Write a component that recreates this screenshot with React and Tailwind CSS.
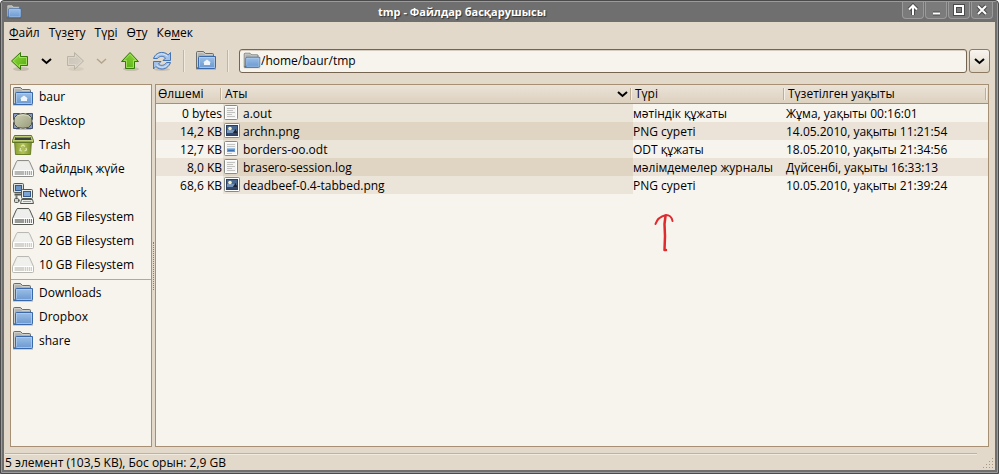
import React from "react";

function FolderIcon({ home = false, size = 22 }) {
  const id = home ? "home" : "plain";
  return (
    <svg width={size} height={size} viewBox="0 0 22 22" className="shrink-0" aria-hidden="true">
      <defs>
        <linearGradient id={`front-${id}`} x1="0" y1="0" x2="0" y2="1">
          <stop offset="0" stopColor="#9dbfe6" />
          <stop offset="1" stopColor="#6a98d0" />
        </linearGradient>
        <linearGradient id={`back-${id}`} x1="0" y1="0" x2="0" y2="1">
          <stop offset="0" stopColor="#bcbcb8" />
          <stop offset="1" stopColor="#858582" />
        </linearGradient>
      </defs>
      <rect x="1" y="18" width="20" height="2" fill="#000" opacity=".15" />
      <path d="M1.500 18.500V2.500Q1.500 1.500 2.500 1.500H8.500L10.500 3.500H17.500Q18.500 3.500 18.500 4.500V18.500Z" fill={`url(#back-${id})`} stroke="#6b6d69" />
      <path d="M2.500 17V2.500H8L10 4.500H17.500" fill="none" stroke="#d6d6d2" opacity=".8" />
      <path d="M4.500 6.500H20.500V17.500Q20.500 18.500 19.500 18.500H2.500Q3.500 18 3.500 16.500V7.500Q3.500 6.500 4.500 6.500Z" fill={`url(#front-${id})`} stroke="#3a69ab" />
      <path d="M4.500 16.500V7.500H19.500V17.500H4.500" fill="none" stroke="#b9d2ee" opacity=".7" />
      {home && <path d="M12 9.500L16 12.500H15V15H9V12.500H8Z" fill="#eef5fd" />}
    </svg>
  );
}

function DesktopIcon() {
  return (
    <svg width="22" height="22" viewBox="0 0 22 22" className="shrink-0" aria-hidden="true">
      <defs>
        <linearGradient id="desk" x1="0" y1="0" x2="1" y2="1">
          <stop offset="0" stopColor="#d0d2b6" />
          <stop offset="1" stopColor="#989a7b" />
        </linearGradient>
      </defs>
      <path d="M4 19.500H19" stroke="#000" opacity=".2" />
      <path d="M1.500 3.500H7.500L1.500 9.500ZM20.500 3.500H14.500L20.500 9.500ZM1.500 18.500H7.500L1.500 12.500ZM20.500 18.500H14.500L20.500 12.500Z" fill="#8798b8" stroke="#44516d" />
      <path d="M5.500 4.500Q11 2.500 16.500 4.500L19.500 7.500Q20.500 11 19.500 14.500L16.500 17.500Q11 19 5.500 17.500L2.500 14.500Q1.500 11 2.500 7.500Z" fill="url(#desk)" stroke="#4d5144" />
      <path d="M6 5.500Q11 4 16 5.500L18.500 8" fill="none" stroke="#e2e3cd" opacity=".8" />
    </svg>
  );
}

function TrashIcon() {
  return (
    <svg width="22" height="22" viewBox="0 0 22 22" className="shrink-0" aria-hidden="true">
      <defs>
        <linearGradient id="bin" x1="0" y1="0" x2="1" y2="0">
          <stop offset="0" stopColor="#8a9e32" />
          <stop offset=".5" stopColor="#b2c258" />
          <stop offset="1" stopColor="#7d912b" />
        </linearGradient>
      </defs>
      <path d="M2.500 6H19.500L18.500 20.500H3.500Z" fill="url(#bin)" stroke="#6a7f28" />
      <path d="M2.500 1.500H19.500L21.500 6.500V8.500H.5V6.500Z" fill="#c3d17c" stroke="#5f7525" />
      <path d="M3.500 3H18.500L19.500 6H2.500Z" fill="#39413c" />
      <path d="M4 3.500H18" stroke="#7c867d" />
      <path d="M1.500 7.500H20.500" stroke="#9aad48" />
      <path d="M9 12.500L11 11L13 12.500M14 14L14.500 16L12.500 17M10 17L8 16.500L8.500 14" fill="none" stroke="#dce8b0" strokeWidth="1.200" />
    </svg>
  );
}

function DriveIcon({ tone = "normal" }) {
  const outline = tone === "dark" ? "#555753" : tone === "normal" ? "#8e8e8b" : "#b9b8b3";
  const face = tone === "faded" ? "#eeede8" : "#e6e6e4";
  const slots = tone === "faded" ? "#cfcec9" : tone === "dark" ? "#7f817d" : "#a9aaa7";
  return (
    <svg width="24" height="22" viewBox="0 0 24 22" className="shrink-0" aria-hidden="true">
      <path d="M5.500 3.500Q5.800 2.500 7 2.500H17Q18.200 2.500 18.500 3.500L22.500 12.500V17.500Q22.500 18.500 21.500 18.500H2.500Q1.500 18.500 1.500 17.500V12.500Z" fill={face} stroke={outline} />
      <path d="M6.500 4H17.500L21 12H3Z" fill="#f0f0ee" opacity=".8" />
      <path d="M2.500 12.500H21.500V17.500H2.500Z" fill={face} stroke="#fff" />
      <path d="M4 15H13" stroke={slots} strokeWidth="4" opacity=".75" />
      <path d="M14.500 13V17M16.500 13V17M18.500 13V17M20.500 13V17" stroke={slots} />
    </svg>
  );
}

function NetworkIcon() {
  return (
    <svg width="24" height="22" viewBox="0 0 24 22" className="shrink-0" aria-hidden="true">
      <rect x="2.500" y="1.500" width="10" height="9" rx="1" fill="#dcdedb" stroke="#555753" />
      <rect x="4.500" y="3.500" width="6" height="5" fill="#6d95c6" stroke="#33598d" />
      <path d="M3.500 12.500H11" stroke="#555753" strokeWidth="2" />
      <rect x="10.500" y="7.500" width="11" height="9" rx="1" fill="#eceeeb" stroke="#555753" />
      <rect x="12.500" y="9.500" width="7" height="5" fill="#7ba3d3" stroke="#33598d" />
      <path d="M10.500 17.500H21.500L22.500 21.500H9.500Z" fill="#eceeeb" stroke="#555753" />
      <path d="M12 19.500H20" stroke="#a1a39f" />
      <path d="M5.500 13V18.500H9" fill="none" stroke="#7a7c78" strokeWidth="2" />
      <rect x="3.500" y="16.500" width="4" height="4" rx="1" fill="#d0d2ce" stroke="#555753" />
    </svg>
  );
}

function FileIcon({ kind }) {
  if (kind === "image") {
    return (
      <svg width="16" height="16" viewBox="0 0 16 16" className="shrink-0" aria-hidden="true">
        <rect x=".5" y=".5" width="15" height="14" rx="1" fill="#fff" stroke="#888a85" />
        <rect x="2" y="2" width="12" height="11" fill="#2a3d63" />
        <path d="M3 3H13V7H3Z" fill="#4a678f" />
        <path d="M3 7H13V10H3Z" fill="#7695bb" />
        <circle cx="6" cy="5.500" r="1.800" fill="#f5f3c7" />
        <path d="M8.500 10.500L11.500 6L13 8.500V10.500Z" fill="#1d2431" />
        <path d="M3 10H13V12H3Z" fill="#35486b" />
      </svg>
    );
  }
  return (
    <svg width="16" height="16" viewBox="0 0 16 16" className="shrink-0" aria-hidden="true">
      <rect x=".5" y=".5" width="13" height="14" rx="1" fill="#f4f4f3" stroke="#888a85" />
      <rect x="1.500" y="1.500" width="11" height="12" fill="none" stroke="#fff" />
      {kind === "office" ? (
        <>
          <path d="M3 3.500H11M3 5.500H11M3 12.500H8" stroke="#c4c5c2" />
          <rect x="3" y="7" width="8" height="4" fill="#6a9bd1" />
          <path d="M3 7.500H11" stroke="#9dc0e5" />
          <path d="M4 9.500H10" stroke="#3e73b3" />
        </>
      ) : (
        <path d="M3 3.500H11M3 5.500H9M3 7.500H11M3 9.500H8M3 11.500H11" stroke="#c1c2bf" />
      )}
    </svg>
  );
}

function ArrowIcon({ direction, muted = false }) {
  const turn = direction === "left" ? "rotate(0)" : direction === "right" ? "rotate(180 11 11)" : "rotate(90 11 11)";
  const id = `arrow-${direction}`;
  return (
    <svg width="22" height="22" viewBox="0 0 22 22" aria-hidden="true">
      <defs>
        <linearGradient id={id} x1="0" y1="0" x2="1" y2="1">
          <stop offset="0" stopColor={muted ? "#d6d1c4" : "#95dd40"} />
          <stop offset="1" stopColor={muted ? "#c9c4b7" : "#4ea80c"} />
        </linearGradient>
      </defs>
      <ellipse cx="12" cy="19" rx="8" ry="2" fill="#000" opacity={muted ? ".05" : ".13"} />
      <g transform={turn}>
        <path d="M2.500 11L11.500 2.500V6.500H18.500V15.500H11.500V19.500Z" fill={`url(#${id})`} stroke={muted ? "#b9b4a6" : "#357a09"} strokeLinejoin="round" />
        <path d="M4.200 11L10.500 5V7.500H17.500V14.500H10.500V17Z" fill="none" stroke={muted ? "#e0dbcf" : "#b4ea73"} opacity=".75" />
      </g>
    </svg>
  );
}

function RefreshIcon() {
  return (
    <svg width="22" height="22" viewBox="0 0 22 22" aria-hidden="true">
      <ellipse cx="11" cy="19.500" rx="8" ry="1.500" fill="#000" opacity=".12" />
      <g fill="#a4c2e8" stroke="#4474b2" strokeLinejoin="round">
        <path d="M2.500 8.500C4 4 8 2 12 2.500C14.500 2.800 16 3.800 17.200 5L19.500 2.500V10.500H12L14.500 8C12.500 6 9 5.500 6.500 8.500Z" />
        <path d="M19.500 12.500C18 17 14 19.500 10 19C7.500 18.700 6 17.700 4.800 16.500L2.500 19V11.500H10L7.500 14C9.500 16 13 16 15.500 12.500Z" />
      </g>
      <path d="M4.500 7.500C7 3.500 12 2.500 16.500 6.300M17.500 13.500C15 17.500 10 18.700 5.500 15.200" fill="none" stroke="#dbe8f7" />
    </svg>
  );
}

function Chevron({ muted = false }) {
  return (
    <svg width="11" height="7" viewBox="0 0 11 7" fill="none" className={muted ? "text-[#b3a48e]" : "text-black"} aria-hidden="true">
      <path d="M1 1L5.500 5L10 1" stroke="currentColor" strokeWidth={muted ? "1.500" : "2"} />
    </svg>
  );
}

const windowControls = [
  ["Shade", "M8 3V13M4 7.500L8 3.500L12 7.500"],
  ["Minimize", "M5 11.500H12"],
  ["Maximize", "M4 4H12V12H4Z"],
  ["Close", "M4 4L12 12M12 4L4 12"],
];

const menus = [
  ["", "Ф", "айл"],
  ["Түз", "е", "ту"],
  ["Тү", "р", "і"],
  ["Ө", "т", "у"],
  ["Кө", "м", "ек"],
];

const places = [
  ["baur", <FolderIcon home />],
  ["Desktop", <DesktopIcon />],
  ["Trash", <TrashIcon />],
  ["Файлдық жүйе", <DriveIcon />],
  ["Network", <NetworkIcon />],
  ["40 GB Filesystem", <DriveIcon tone="dark" />],
  ["20 GB Filesystem", <DriveIcon tone="faded" />],
  ["10 GB Filesystem", <DriveIcon tone="faded" />],
];

const bookmarks = ["Downloads", "Dropbox", "share"].map((name) => [name, <FolderIcon />]);

const columns = ["Өлшемі", "Аты", "Түрі", "Түзетілген уақыты"];

const files = [
  ["0 bytes", "text", "a.out", "мәтіндік құжаты", "Жұма, уақыты 00:16:01"],
  ["14,2 KB", "image", "archn.png", "PNG суреті", "14.05.2010, уақыты 11:21:54"],
  ["12,7 KB", "office", "borders-oo.odt", "ODT құжаты", "18.05.2010, уақыты 21:34:56"],
  ["8,0 KB", "text", "brasero-session.log", "мәлімдемелер журналы", "Дүйсенбі, уақыты 16:33:13"],
  ["68,6 KB", "image", "deadbeef-0.4-tabbed.png", "PNG суреті", "10.05.2010, уақыты 21:39:24"],
];

function TitleBar() {
  return (
    <header className="flex h-5 items-start bg-[#6f6f6f]">
      <div className="flex w-6 pt-[2px] pl-1">
        <FolderIcon size={16} />
      </div>
      <h1 className="flex-1 text-center text-[11px] leading-5 font-bold text-white [text-shadow:1px_1px_1px_#333]">
        tmp - Файлдар басқарушысы
      </h1>
      <div className="flex gap-px pr-1 pl-1">
        {windowControls.map(([label, d]) => (
          <button key={label} aria-label={label} className="flex h-[17px] w-[22px] items-center justify-center rounded-b-sm border border-t-0 border-[#9a9a9a] bg-[#7b7b7b]">
            <svg width="16" height="16" viewBox="0 0 16 16" fill="none" aria-hidden="true">
              <path d={d} stroke="#4b4b4b" strokeWidth="4" />
              <path d={d} stroke="#fff" strokeWidth="2" />
            </svg>
          </button>
        ))}
      </div>
    </header>
  );
}

function ToolSeparator() {
  return <div className="h-[22px] w-[2px] border-r border-l border-r-[#f1eadf] border-l-[#c3b59f]" />;
}

function Toolbar() {
  return (
    <div className="flex h-[34px] items-center pr-[5px] pl-[5px]">
      <button aria-label="Back"><ArrowIcon direction="left" /></button>
      <button aria-label="Back history" className="ml-[10px]"><Chevron /></button>
      <button aria-label="Forward" disabled className="ml-3"><ArrowIcon direction="right" muted /></button>
      <button aria-label="Forward history" disabled className="ml-[10px]"><Chevron muted /></button>
      <button aria-label="Up" className="ml-3"><ArrowIcon direction="up" /></button>
      <button aria-label="Reload" className="mr-[10px] ml-[10px]"><RefreshIcon /></button>
      <ToolSeparator />
      <button aria-label="Home" className="mr-[10px] ml-[10px]"><FolderIcon home /></button>
      <ToolSeparator />
      <div className="ml-[10px] flex h-6 flex-1 items-center rounded-[3px] border border-[#756550] bg-[#f7f4ed] pl-[3px] shadow-[inset_0_1px_0_#d5cdc0]">
        <FolderIcon size={18} />
        <input id="location" aria-label="Location" defaultValue="/home/baur/tmp" className="min-w-0 flex-1 bg-transparent outline-none" />
      </div>
      <button aria-label="Location history" className="ml-[2px] flex h-6 w-[21px] items-center justify-center rounded-[3px] border border-[#8c7a62] bg-linear-to-b from-[#f8f5ef] to-[#e0d6c6]">
        <Chevron />
      </button>
    </div>
  );
}

function PlaceList({ items }) {
  return (
    <ul>
      {items.map(([name, icon]) => (
        <li key={name}>
          <a href="#" className="flex h-6 items-center gap-1">
            <span className="flex w-6 justify-center">{icon}</span>
            {name}
          </a>
        </li>
      ))}
    </ul>
  );
}

function FileTable() {
  return (
    <table className="w-full table-fixed border-separate border-spacing-0 text-left leading-[17px] whitespace-nowrap">
      <colgroup>
        <col className="w-[67px]" />
        <col />
        <col className="w-[153px]" />
        <col className="w-[202px]" />
      </colgroup>
      <thead>
        <tr>
          {columns.map((name) => (
            <th key={name} scope="col" className="border-b border-[#a78f73] bg-linear-to-b from-[#ebe3d8] to-[#ddd1bf] p-0 font-normal">
              <button className="flex h-[18px] w-full items-center pr-px pl-[2px] text-left">
                <span className="flex-1 leading-[18px]">{name}</span>
                {name === "Аты" && <Chevron />}
                <span className="ml-[2px] h-3 w-[2px] border-r border-l border-r-[#f5efe6] border-l-[#bfae96]" />
              </button>
            </th>
          ))}
        </tr>
      </thead>
      <tbody>
        {files.map(([size, kind, name, type, modified]) => (
          <tr key={name} className="group h-[18px] even:bg-[#ebe3d7]">
            <td className="p-0 pr-px text-right">{size}</td>
            <td className="bg-[#ebe4d8] p-0 group-even:bg-[#e0d4c2]">
              <span className="flex h-[18px] items-center gap-[3px] pl-px">
                <FileIcon kind={kind} />
                {name}
              </span>
            </td>
            <td className="p-0">{type}</td>
            <td className="p-0">{modified}</td>
          </tr>
        ))}
      </tbody>
    </table>
  );
}

export default function App() {
  return (
    <div className="flex min-h-screen flex-col bg-white font-['Open_Sans','Noto_Sans',sans-serif] text-[12px] leading-[18px] text-black">
      <div className="flex flex-1 flex-col rounded-t-[4px] border border-[#4a4a4a] bg-[#4a4a4a]">
        <div className="flex flex-1 flex-col rounded-t-[3px] border border-[#9b9b9b] bg-[#6f6f6f]">
          <TitleBar />
          <div className="flex flex-1 flex-col border-r-2 border-b-2 border-l-2 border-[#6f6f6f] bg-[#e3d9ca]">
            <nav className="flex h-[22px] items-center gap-[9px] pl-[5px]">
              {menus.map(([before, key, after]) => (
                <button key={before + key}>
                  {before}<span className="underline underline-offset-2">{key}</span>{after}
                </button>
              ))}
            </nav>
            <Toolbar />
            <main className="flex flex-1 px-[6px] pt-[6px]">
              <aside className="w-[142px] shrink-0 border border-[#a78f73] bg-[#f7f4ed]">
                <PlaceList items={places} />
                <hr className="mt-[2px] mb-px border-t border-[#b9a78f]" />
                <PlaceList items={bookmarks} />
              </aside>
              <div className="flex w-[3px] shrink-0 items-center justify-center">
                <div className="h-12 border-l border-dotted border-[#8f7d65]" />
              </div>
              <section className="relative min-w-0 flex-1 border border-[#a78f73] bg-[#f7f4ed]">
                <FileTable />
                <svg width="20" height="42" viewBox="0 0 20 42" fill="none" stroke="#df2a2e" strokeWidth="2" strokeLinecap="round" strokeLinejoin="round" className="absolute top-[127px] left-[498px]" aria-hidden="true">
                  <path d="M1.500 12C3 7 8 4 12 3C15 3 18 5 18.500 9" />
                  <path d="M11.500 4L10.500 12L11 24L10.500 38H12" strokeWidth="2.500" />
                </svg>
              </section>
            </main>
            <footer className="relative mt-[6px] h-[17px] pl-px">
              <div className="mr-[18px] h-[2px] border-t border-b border-t-[#bfb29e] border-b-[#f1eadf]" />
              <p className="leading-[15px]">5 элемент (103,5 KB), Бос орын: 2,9 GB</p>
              <svg width="12" height="12" viewBox="0 0 12 12" fill="#a8997f" className="absolute right-px bottom-px" aria-hidden="true">
                <path d="M10 1h1v1h-1zM7 4h1v1h-1zM10 4h1v1h-1zM4 7h1v1h-1zM7 7h1v1h-1zM10 7h1v1h-1zM1 10h1v1h-1zM4 10h1v1h-1zM7 10h1v1h-1zM10 10h1v1h-1z" />
              </svg>
            </footer>
          </div>
        </div>
      </div>
    </div>
  );
}
